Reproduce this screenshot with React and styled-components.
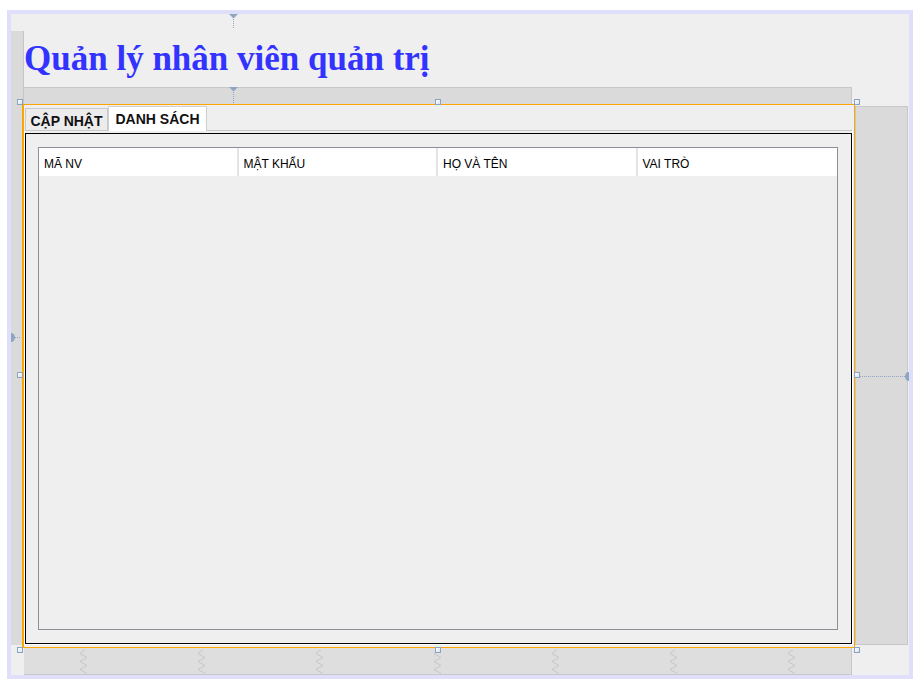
import React from "react";
import styled, { createGlobalStyle } from "styled-components";

const Global = createGlobalStyle`
  html, body { margin: 0; padding: 0; background: #ffffff; }
  #root { padding: 10px 0 0 7px; }
`;

const Frame = styled.div`
  width: 906px;
  height: 669px;
  box-sizing: border-box;
  border: 4px solid #dfdffb;
  background: #efefef;
`;

const Canvas = styled.div`
  position: relative;
  display: grid;
  grid-template-columns: 13px 831px 54px;
  grid-template-rows: 73px 17px 544px 27px;
  height: 100%;
`;

const Title = styled.h1`
  grid-column: 2;
  grid-row: 1;
  margin: 25px 0 0 0;
  font-family: "Liberation Serif", "Times New Roman", serif;
  font-weight: bold;
  font-size: 35px;
  line-height: 40px;
  color: #3333ff;
  white-space: nowrap;
`;

const LeftStrip = styled.div`
  grid-column: 1;
  grid-row: 1 / 4;
  margin: 17px 0 3px 0;
  background: #dadada;
  border-right: 1px solid #c6c6c6;
`;

const GuideBar = styled.div`
  grid-column: 2;
  grid-row: 2;
  margin-right: 3px;
  background: #dadada;
  border-top: 1px solid #c8c8c8;
  border-right: 1px solid #c8c8c8;
`;

const DesignBox = styled.div`
  grid-column: 2;
  grid-row: 3;
  margin-left: -2px;
  position: relative;
  z-index: 1;
  box-sizing: border-box;
  border: 1px solid #ffa500;
  border-left-width: 2px;
  display: flex;
  flex-direction: column;
`;

const RightStrip = styled.div`
  grid-column: 3;
  grid-row: 3;
  margin: 2px 1px 3px 0;
  background: #dadada;
  border: 1px solid #c8c8c8;
`;

const BottomBar = styled.div`
  grid-column: 2;
  grid-row: 4;
  margin-right: 3px;
  background: #dedede;
  border-bottom: 1px solid #c8c8c8;
  border-right: 1px solid #c8c8c8;
  display: flex;
  justify-content: space-around;
  align-items: center;
`;

const TabBar = styled.div`
  display: flex;
  align-items: flex-end;
  height: 25px;
  padding-left: 1px;
`;

const Tab = styled.div`
  box-sizing: border-box;
  display: flex;
  align-items: center;
  justify-content: center;
  font-family: "Liberation Sans", Arial, sans-serif;
  font-weight: bold;
  font-size: 14px;
  color: #111;
  border: 1px solid ${(p) => (p.$active ? "#d0d0d0" : "#c8c8c8")};
  border-bottom: none;
  background: ${(p) => (p.$active ? "#ffffff" : "#ececec")};
  width: ${(p) => p.$w}px;
  height: ${(p) => (p.$active ? 25 : 22)}px;
  margin-bottom: ${(p) => (p.$active ? -1 : 0)}px;
  padding-top: ${(p) => (p.$active ? 0 : 3)}px;
  position: relative;
  z-index: ${(p) => (p.$active ? 1 : 0)};
`;

const Panel = styled.div`
  margin-right: 1px;
  border: 1px solid #ffffff;
  border-top-color: #c8c8c8;
  padding-top: 2px;
  display: flex;
`;

const BlackBox = styled.div`
  flex: 1;
  border: 1px solid #000000;
  padding: 13px 13px 13px 12px;
`;

const Table = styled.div`
  box-sizing: border-box;
  height: 483px;
  border: 1px solid #8c8e98;
  background: #efefef;
`;

const HeaderRow = styled.div`
  display: grid;
  grid-template-columns: repeat(4, 1fr);
  height: 28px;
  background: #ffffff;
`;

const HeaderCell = styled.div`
  box-sizing: border-box;
  padding: 4px 0 0 5px;
  line-height: 24px;
  font-family: "Liberation Sans", Arial, sans-serif;
  font-size: 12px;
  color: #000;
  border-right: ${(p) => (p.$last ? "none" : "2px solid #e4e4e4")};
  white-space: nowrap;
`;

const Handle = styled.div`
  position: absolute;
  z-index: 3;
  box-sizing: border-box;
  width: 6px;
  height: 6px;
  border: 1px solid #8aa3c2;
  background: linear-gradient(135deg, #ffffff, #d8e2ee);
  left: ${(p) => p.$x}px;
  top: ${(p) => p.$y}px;
`;

const Marker = styled.svg`
  position: absolute;
  z-index: 3;
  left: ${(p) => p.$x}px;
  top: ${(p) => p.$y}px;
  overflow: visible;
`;

const MARK = "#8ea6c2";

function VAnchor({ x, y, len }) {
  return (
    <Marker $x={x} $y={y} width="9" height={len} viewBox={`0 0 9 ${len}`}>
      <polygon points="0,0 9,0 4.5,4.5" fill={MARK} />
      <line x1="4.5" y1="5" x2="4.5" y2={len} stroke={MARK} strokeDasharray="1 1" />
    </Marker>
  );
}

function Zigzag() {
  return (
    <svg width="9" height="25" viewBox="0 0 9 25">
      <polyline
        points="6,0.5 1,4.5 8,8.5 1,12.5 8,16.5 1,20.5 8,24.5"
        fill="none"
        stroke="#c6c6c6"
        strokeWidth="1"
      />
    </svg>
  );
}

const columns = ["MÃ NV", "MẬT KHẨU", "HỌ VÀ TÊN", "VAI TRÒ"];
const handles = [
  [6, 85], [424, 85], [843, 85],
  [6, 358], [843, 358],
  [6, 633], [424, 633], [843, 633],
];

export default function App() {
  return (
    <>
      <Global />
      <Frame>
        <Canvas>
          <LeftStrip />
          <Title>Quản lý nhân viên quản trị</Title>
          <GuideBar />
          <DesignBox>
            <TabBar>
              <Tab $w={83}>CẬP NHẬT</Tab>
              <Tab $w={99} $active>DANH SÁCH</Tab>
            </TabBar>
            <Panel>
              <BlackBox>
                <Table>
                  <HeaderRow>
                    {columns.map((c, i) => (
                      <HeaderCell key={c} $last={i === columns.length - 1}>{c}</HeaderCell>
                    ))}
                  </HeaderRow>
                </Table>
              </BlackBox>
            </Panel>
          </DesignBox>
          <RightStrip />
          <BottomBar>
            {Array.from({ length: 7 }).map((_, i) => (
              <Zigzag key={i} />
            ))}
          </BottomBar>

          <VAnchor x={218} y={0} len={15} />
          <VAnchor x={218} y={73} len={17} />
          <Marker $x={0} $y={319} width="10" height="9" viewBox="0 0 10 9">
            <path d="M0,0 A4,4.5 0 0 1 0,9 Z" fill={MARK} />
            <line x1="4" y1="4.5" x2="10" y2="4.5" stroke={MARK} strokeDasharray="1 1" />
          </Marker>
          <Marker $x={849} $y={358} width="49" height="9" viewBox="0 0 49 9">
            <line x1="0" y1="4.5" x2="45" y2="4.5" stroke={MARK} strokeDasharray="1 1" />
            <path d="M49,0 A4,4.5 0 0 0 49,9 Z" fill={MARK} />
          </Marker>
          {handles.map(([x, y], i) => (
            <Handle key={i} $x={x} $y={y} />
          ))}
        </Canvas>
      </Frame>
    </>
  );
}
